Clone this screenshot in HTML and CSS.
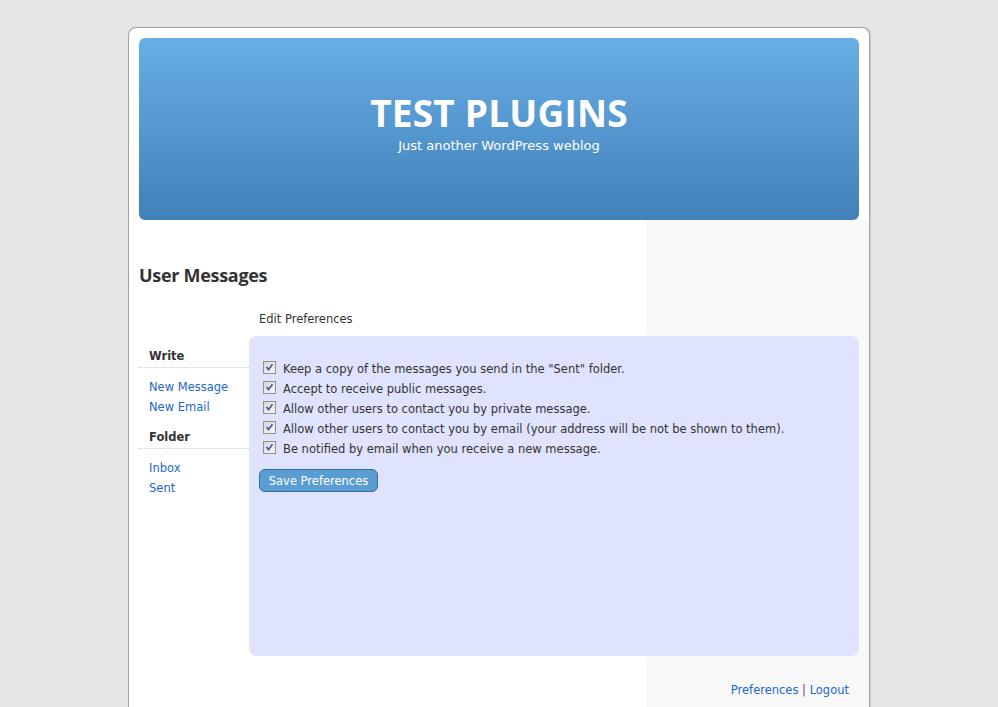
FILE: index.html
```html
<!DOCTYPE html>
<html>
<head>
<meta charset="utf-8">
<title>Test Plugins</title>
<link rel="stylesheet" href="styles.css">
</head>
<body>
<div class="wrap">
  <header class="header">
    <h1 class="site-title">TEST PLUGINS</h1>
    <p class="tagline">Just another WordPress weblog</p>
  </header>
  <div class="content">
    <h2 class="page-title">User Messages</h2>
    <div class="messages">
      <nav class="msg-nav">
        <h3 class="nav-head">Write</h3>
        <ul class="nav-list">
          <li><a href="#">New Message</a></li>
          <li><a href="#">New Email</a></li>
        </ul>
        <h3 class="nav-head">Folder</h3>
        <ul class="nav-list">
          <li><a href="#">Inbox</a></li>
          <li><a href="#">Sent</a></li>
        </ul>
      </nav>
      <section class="msg-main">
        <div class="section-title">Edit Preferences</div>
        <form class="pref-box">
          <label class="pref-row"><span class="cb"><svg viewBox="0 0 11 11" width="11" height="11"><path d="M2.5 5 L4.5 7.5 L8.5 2.2" fill="none" stroke="#4a5aa6" stroke-width="1.8"/></svg></span>Keep a copy of the messages you send in the "Sent" folder.</label>
          <label class="pref-row"><span class="cb"><svg viewBox="0 0 11 11" width="11" height="11"><path d="M2.5 5 L4.5 7.5 L8.5 2.2" fill="none" stroke="#4a5aa6" stroke-width="1.8"/></svg></span>Accept to receive public messages.</label>
          <label class="pref-row"><span class="cb"><svg viewBox="0 0 11 11" width="11" height="11"><path d="M2.5 5 L4.5 7.5 L8.5 2.2" fill="none" stroke="#4a5aa6" stroke-width="1.8"/></svg></span>Allow other users to contact you by private message.</label>
          <label class="pref-row"><span class="cb"><svg viewBox="0 0 11 11" width="11" height="11"><path d="M2.5 5 L4.5 7.5 L8.5 2.2" fill="none" stroke="#4a5aa6" stroke-width="1.8"/></svg></span>Allow other users to contact you by email (your address will be not be shown to them).</label>
          <label class="pref-row"><span class="cb"><svg viewBox="0 0 11 11" width="11" height="11"><path d="M2.5 5 L4.5 7.5 L8.5 2.2" fill="none" stroke="#4a5aa6" stroke-width="1.8"/></svg></span>Be notified by email when you receive a new message.</label>
          <button type="button" class="save-btn">Save Preferences</button>
        </form>
      </section>
    </div>
    <div class="user-links"><a href="#">Preferences</a> <span class="sep">|</span> <a href="#">Logout</a></div>
  </div>
</div>
</body>
</html>
```
FILE: styles.css
```css
html, body {
  margin: 0;
  padding: 0;
}
body {
  background: #e6e6e6;
  font-family: "DejaVu Sans", Verdana, sans-serif;
  font-size: 11.5px;
  color: #333;
}
a {
  color: #2266cc;
  text-decoration: none;
}
.wrap {
  width: 740px;
  margin: 27px auto 0;
  background: #fff;
  border: 1px solid #a3a3a3;
  border-bottom: none;
  border-radius: 8px 8px 0 0;
  box-shadow: 1px 0 1px rgba(0,0,0,0.12);
  padding-top: 10px;
  min-height: 700px;
}
.header {
  margin: 0 10px;
  height: 182px;
  box-sizing: border-box;
  padding-top: 55px;
  border-radius: 6px;
  background: linear-gradient(to bottom, #69aee6, #4180b9);
  display: flex;
  flex-direction: column;
  align-items: center;
  color: #fff;
}
.site-title {
  margin: 0;
  font-family: "Open Sans", sans-serif;
  font-weight: 700;
  font-size: 37px;
  line-height: 40px;
  letter-spacing: 0.2px;
}
.tagline {
  margin: 5px 0 0;
  font-size: 13px;
  line-height: 16px;
}
.content {
  background: linear-gradient(to right, #fff 517px, #f8f8f8 517px);
  padding: 40px 10px 20px;
}
.page-title {
  margin: 0;
  font-family: "Open Sans", sans-serif;
  font-weight: 700;
  font-size: 18px;
  line-height: 30px;
  letter-spacing: -0.3px;
  color: #333;
}
.messages {
  display: grid;
  grid-template-columns: 110px 610px;
  margin-top: 21px;
}
.msg-nav {
  padding-top: 36px;
}
.nav-head {
  margin: 0;
  padding: 0 0 2px 10px;
  font-size: 11.5px;
  line-height: 18px;
  font-weight: 700;
  color: #333;
  border-bottom: 1px dotted #c8d0f0;
}
.nav-list {
  list-style: none;
  margin: 9px 0 11px;
  padding: 0 0 0 10px;
}
.nav-list li {
  line-height: 20px;
}
.section-title {
  padding-left: 10px;
  line-height: 16px;
}
.pref-box {
  margin-top: 9px;
  height: 320px;
  box-sizing: border-box;
  background: #dfe3fd;
  border-radius: 8px;
  padding: 23px 10px 0 14px;
}
.pref-row {
  display: flex;
  align-items: center;
  height: 20px;
  white-space: nowrap;
}
.cb {
  width: 11px;
  height: 11px;
  border: 1px solid #8e8f8f;
  background: linear-gradient(135deg, #d8d8d2, #f8f8f6);
  margin-right: 7px;
  display: flex;
  margin-top: -4px;
}
.save-btn {
  margin: 10px 0 0 -4px;
  height: 23px;
  width: 119px;
  border: 1px solid #2e6ca3;
  border-radius: 6px;
  background: #5a9dd3;
  color: #fff;
  font-family: "DejaVu Sans", Verdana, sans-serif;
  font-size: 11.5px;
  padding: 0;
}
.user-links {
  margin-top: 26px;
  text-align: right;
  padding-right: 10px;
  line-height: 16px;
}
.sep {
  color: #7a3a6a;
}
```
